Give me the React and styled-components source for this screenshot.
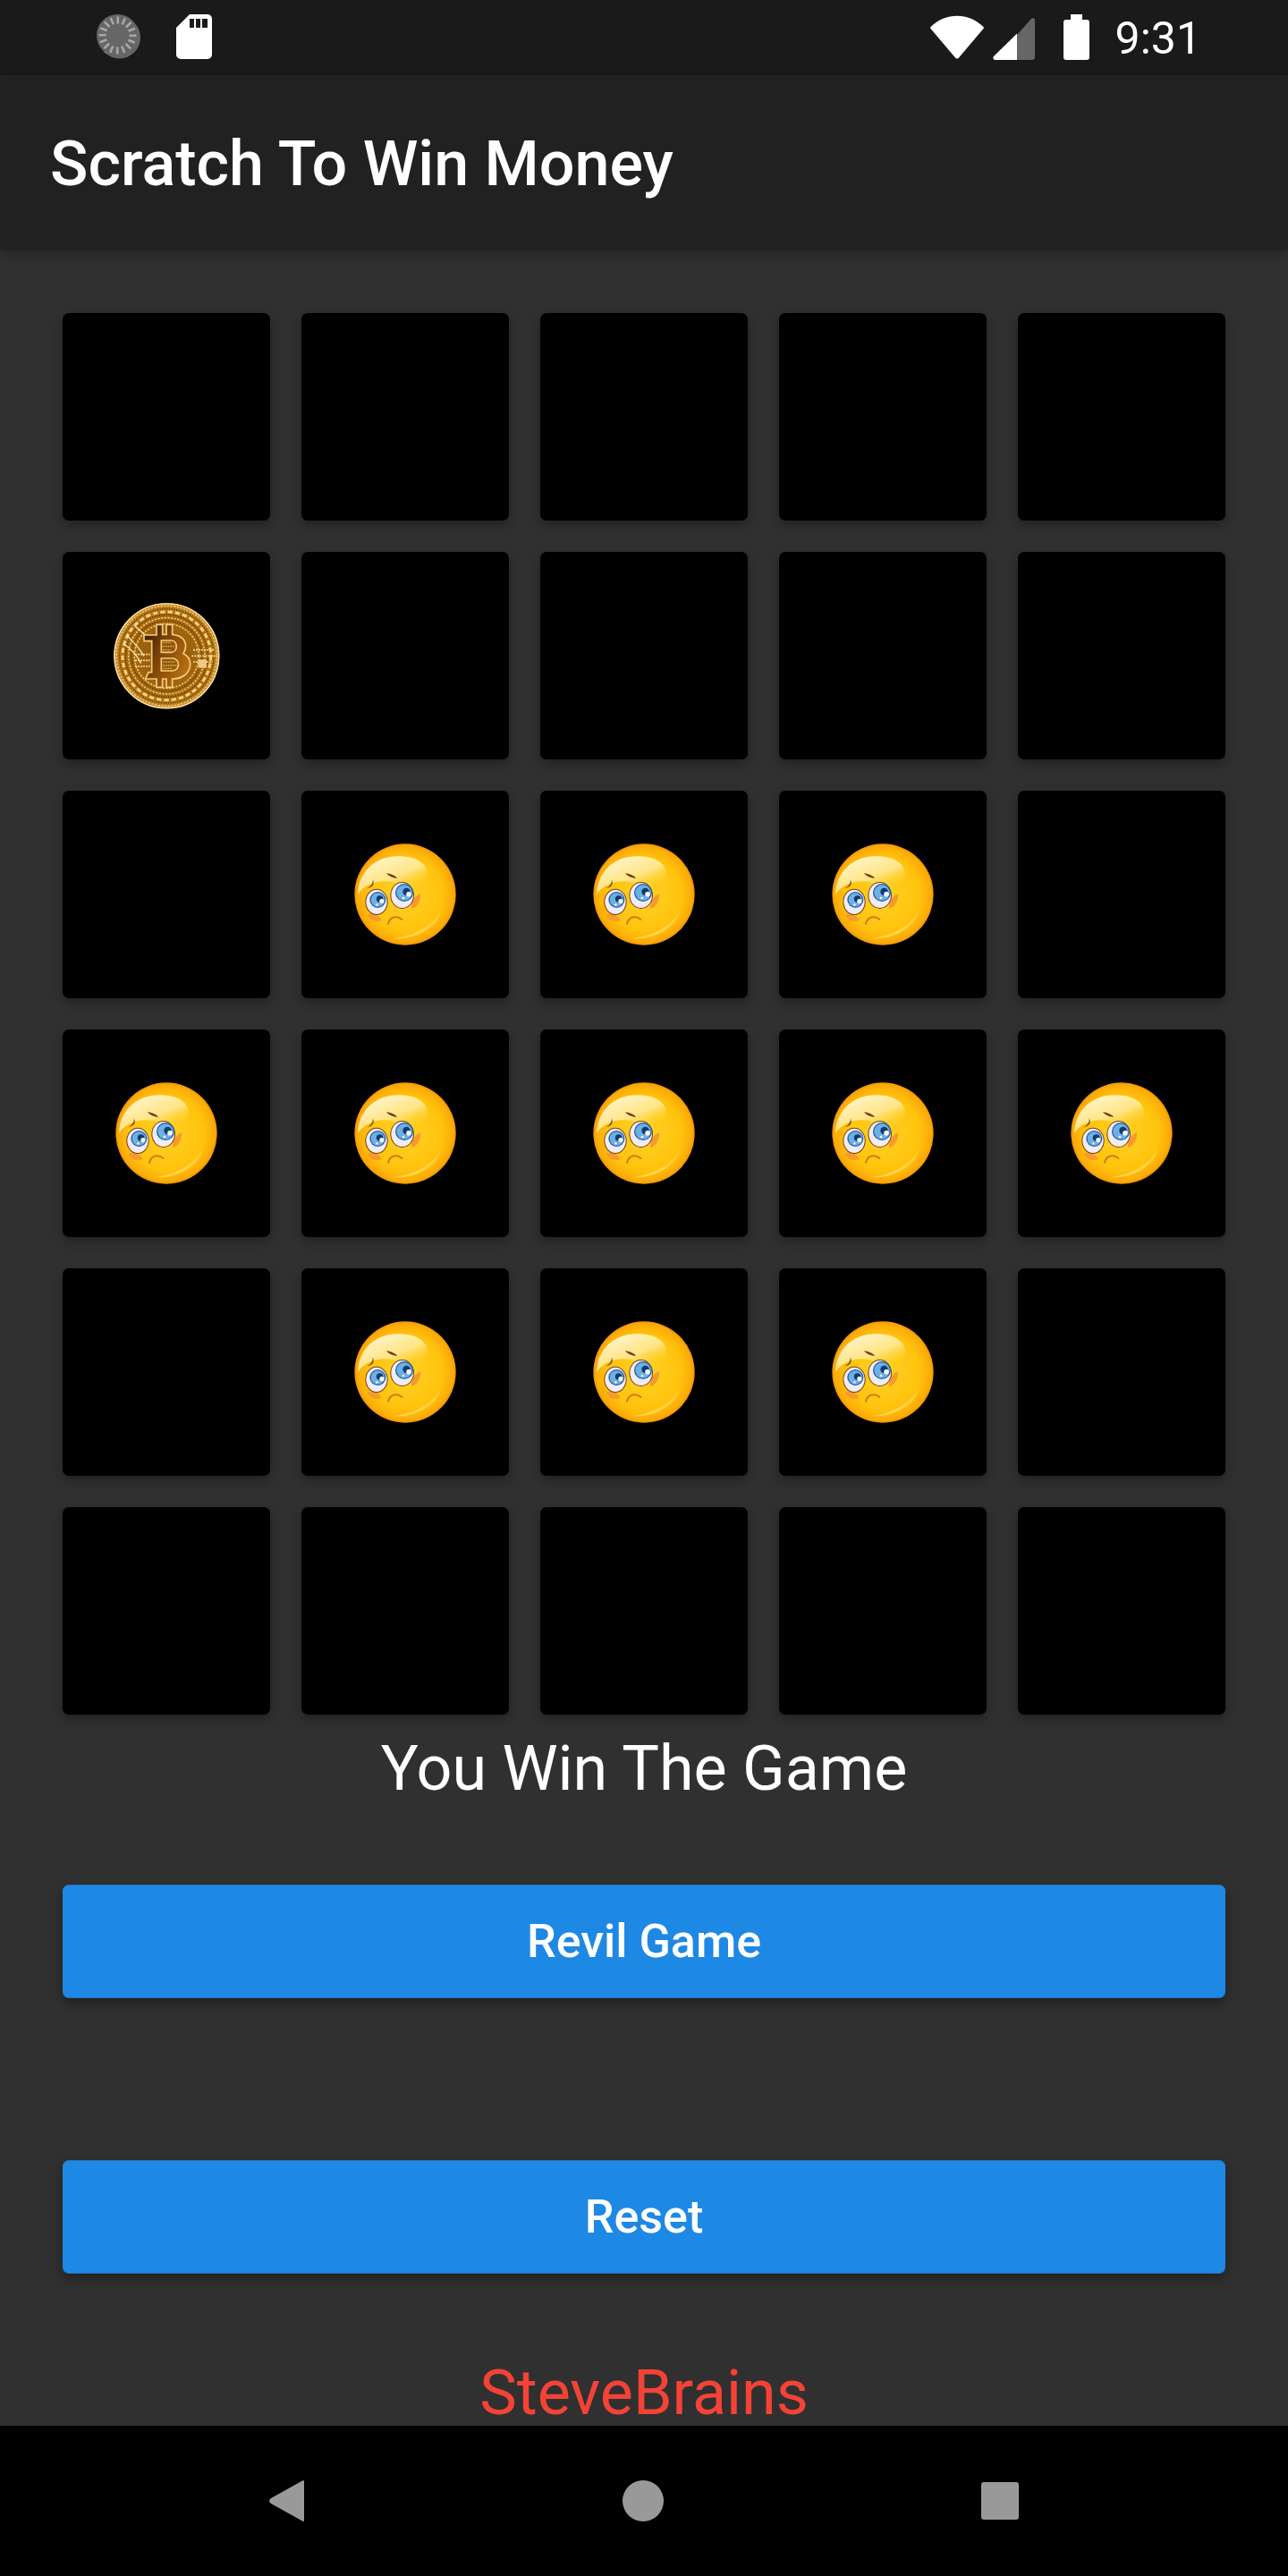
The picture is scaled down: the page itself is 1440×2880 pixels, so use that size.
import { useId } from "react";
import styled, { createGlobalStyle } from "styled-components";

const GlobalStyle = createGlobalStyle`
  html, body {
    margin: 0;
    padding: 0;
    background: #303030;
  }
  * {
    box-sizing: border-box;
  }
`;

const Screen = styled.div`
  width: 1440px;
  height: 2880px;
  display: flex;
  flex-direction: column;
  font-family: Roboto, "Liberation Sans", sans-serif;
  overflow: hidden;
`;

const StatusBar = styled.div`
  height: 84px;
  flex: none;
  display: flex;
  align-items: flex-start;
  background: #1a1a1a;
  padding: 16px 97px 0 108px;
  color: #fff;
`;

const StatusLeft = styled.div`
  display: flex;
  gap: 40px;
  flex: 1;
`;

const StatusRight = styled.div`
  display: flex;
  align-items: flex-start;
`;

const Time = styled.span`
  font-size: 50px;
  line-height: 57px;
  font-weight: 400;
  margin-left: 29px;
  margin-top: -1px;
`;

const AppBar = styled.div`
  height: 196px;
  flex: none;
  display: flex;
  align-items: center;
  padding: 2px 0 0 56px;
  background: #212121;
  box-shadow: 0 4px 12px rgba(0, 0, 0, 0.25);
  position: relative;
  z-index: 1;
`;

const Title = styled.h1`
  margin: 0;
  font-size: 70px;
  font-weight: 500;
  color: #fff;
`;

const Main = styled.div`
  flex: 1;
  display: flex;
  flex-direction: column;
  align-items: stretch;
  padding: 70px 70px 0;
  background: #303030;
`;

const Board = styled.div`
  display: grid;
  grid-template-columns: repeat(5, 232px);
  grid-auto-rows: 232px;
  gap: 35px;
`;

const Tile = styled.div`
  display: flex;
  align-items: center;
  justify-content: center;
  background: #000;
  border-radius: 7px;
  box-shadow: 0 5px 12px rgba(0, 0, 0, 0.3);
`;

const Message = styled.div`
  margin-top: 21px;
  font-size: 70px;
  line-height: 78px;
  text-align: center;
  color: #fff;
`;

const ActionButton = styled.button`
  display: block;
  width: 100%;
  height: 127px;
  margin-top: ${({ $top }) => $top}px;
  border: 0;
  border-top: 1px solid #2674bb;
  border-bottom: 1px solid #2674bb;
  border-radius: 7px;
  background: #1e88e5;
  color: #fff;
  font-family: inherit;
  font-size: 52px;
  font-weight: 500;
  box-shadow: 0 5px 12px rgba(0, 0, 0, 0.35);
`;

const Credit = styled.div`
  margin-top: 101px;
  font-size: 70px;
  line-height: 64px;
  text-align: center;
  color: #f44336;
`;

const NavBar = styled.div`
  height: 168px;
  flex: none;
  background: #000;
  display: flex;
  align-items: center;
  justify-content: center;
  gap: 355px;
`;

function Spinner() {
  const ticks = Array.from({ length: 16 }, (_, i) => i * 22.5);
  return (
    <svg width="49" height="50" viewBox="0 0 49 50">
      <circle cx="25.5" cy="26" r="23.5" fill="#666" />
      <path d="M8 42 C22 50 43 42 45 14 C49 28 44 44 24 44 C17 44 12 43 8 42 Z" fill="#fff" />
      <circle cx="23.5" cy="23.5" r="23.5" fill="#666" />
      {ticks.map((a) => (
        <rect
          key={a}
          x="22.5"
          y="2.5"
          width="2.6"
          height="8"
          fill="#a8a8a8"
          transform={`rotate(${a} 23.5 23.5)`}
        />
      ))}
    </svg>
  );
}

function SdCard() {
  return (
    <svg width="40" height="50" viewBox="0 0 40 50">
      <path
        fillRule="evenodd"
        fill="#fff"
        d="M15 0 H35 A5 5 0 0 1 40 5 V45 A5 5 0 0 1 35 50 H5 A5 5 0 0 1 0 45 V15 Z M15 5 V15 H20 V5 Z M22 5 V15 H27 V5 Z M29 5 V15 H35 V5 Z"
      />
    </svg>
  );
}

function Wifi() {
  return (
    <svg width="60" height="50" viewBox="0 0 60 50" style={{ marginTop: 1 }}>
      <path
        fill="#fff"
        d="M0.5 13 C17 -3.5 43 -3.5 59.5 13 C60 13.7 60 14.5 59.3 15.3 L32 47.5 C30.8 48.8 29.2 48.8 28 47.5 L0.7 15.3 C0 14.5 0 13.7 0.5 13 Z"
      />
    </svg>
  );
}

function Signal() {
  return (
    <svg width="47" height="48" viewBox="0 0 47 48" style={{ marginLeft: 10, marginTop: 3 }}>
      <path fill="#666" d="M27 20 L43 2 C44.5 0.5 47 1 47 3.5 V45 A3 3 0 0 1 44 48 H27 Z" />
      <path fill="#fff" d="M27 18.5 V48 H3 C0.5 48 -0.5 45.5 1.2 43.8 Z" />
    </svg>
  );
}

function Battery() {
  return (
    <svg width="29" height="51" viewBox="0 0 29 51" style={{ marginLeft: 32 }}>
      <path
        fill="#fff"
        d="M8 0 H21 V6 H26 A3 3 0 0 1 29 9 V48 A3 3 0 0 1 26 51 H3 A3 3 0 0 1 0 48 V9 A3 3 0 0 1 3 6 H8 Z"
      />
    </svg>
  );
}

function Coin() {
  const id = useId();
  const rings = [168, 158, 148, 138, 128, 118, 108];
  return (
    <svg width="119" height="119" viewBox="228 222 357 357">
      <defs>
        <radialGradient id={`${id}face`} cx="50%" cy="50%" r="52%">
          <stop offset="0%" stopColor="#8a5208" />
          <stop offset="75%" stopColor="#a86c10" />
          <stop offset="100%" stopColor="#c58c2c" />
        </radialGradient>
        <linearGradient id={`${id}mark`} x1="0" y1="0" x2="1" y2="0.6">
          <stop offset="0%" stopColor="#2e1602" />
          <stop offset="45%" stopColor="#7d4306" />
          <stop offset="100%" stopColor="#b86f12" />
        </linearGradient>
      </defs>
      <circle cx="406" cy="400" r="177" fill={`url(#${id}face)`} />
      <circle cx="406" cy="400" r="175" fill="none" stroke="#f8dc9a" strokeWidth="5" />
      {rings.map((r, i) => (
        <circle
          key={r}
          cx="406"
          cy="400"
          r={r}
          fill="none"
          stroke={i % 2 ? "#3f2003" : "#ffd277"}
          strokeWidth={i === 2 ? 9 : 4}
          strokeDasharray={i === 2 ? "16 9" : i % 2 ? "3 5" : "7 4"}
        />
      ))}
      <path
        d="M272 330 C290 350 312 370 330 400 M262 360 C285 375 305 395 320 425 M300 300 C320 318 335 330 350 345"
        fill="none"
        stroke="#fff0c0"
        strokeWidth="4"
      />
      <path
        d="M490 400 H572 M495 380 H565 M495 420 H560 M300 395 H350 M300 415 H350 M300 435 H350"
        fill="none"
        stroke="#fbdc98"
        strokeWidth="5"
        strokeDasharray="6 3"
      />
      <rect x="512" y="412" width="28" height="28" fill="#f0c987" />
      <path
        fillRule="evenodd"
        fill={`url(#${id}mark)`}
        stroke="#f5cc7c"
        strokeWidth="5"
        d="M330 330 H372 V295 H392 V328 H405 V295 H425 V328 C470 332 478 365 462 392 C490 405 492 440 470 462 C455 475 440 477 425 477 V505 H405 V477 H392 V505 H372 V477 H335 L345 455 H356 V350 H330 Z M388 348 V388 H420 C445 388 445 348 420 348 Z M388 408 V450 H425 C452 450 452 408 425 408 Z"
      />
      <path d="M394 355 H420 M394 368 H432 M394 380 H420 M394 420 H435 M394 432 H440 M394 442 H425" stroke="#e2ad52" strokeWidth="4" strokeDasharray="5 3" />
    </svg>
  );
}

function Eye({ cx, cy, rx, ry, ix, iy, ir }) {
  return (
    <>
      <ellipse cx={cx} cy={cy} rx={rx + 3} ry={ry + 3} fill="#7a3f0c" />
      <ellipse cx={cx} cy={cy} rx={rx} ry={ry} fill="#f1ecf8" />
      <circle cx={ix} cy={iy} r={ir} fill="#1f5fa6" />
      <circle cx={ix} cy={iy} r={ir - 4} fill="#6db0e4" />
      <circle cx={ix + ir * 0.25} cy={iy - ir * 0.1} r={ir * 0.42} fill="#123a6e" />
      <circle cx={ix + ir * 0.5} cy={iy + ir * 0.18} r={ir * 0.28} fill="#fff" />
      <circle cx={ix - ir * 0.1} cy={iy + ir * 0.6} r={ir * 0.13} fill="#fff" />
    </>
  );
}

function SadFace() {
  const id = useId();
  return (
    <svg width="116" height="116" viewBox="105 64 348 348">
      <defs>
        <radialGradient id={`${id}skin`} cx="50%" cy="50%" r="51%">
          <stop offset="0%" stopColor="#ffd126" />
          <stop offset="72%" stopColor="#ffc30d" />
          <stop offset="93%" stopColor="#fcab08" />
          <stop offset="100%" stopColor="#ea8a06" />
        </radialGradient>
        <linearGradient id={`${id}shine`} x1="0.1" y1="0.05" x2="0.75" y2="0.9">
          <stop offset="0%" stopColor="#fff8d8" />
          <stop offset="60%" stopColor="#ffeb9c" stopOpacity="0.85" />
          <stop offset="100%" stopColor="#ffd126" stopOpacity="0" />
        </linearGradient>
        <linearGradient id={`${id}glow`} x1="0.2" y1="0" x2="0.8" y2="1">
          <stop offset="0%" stopColor="#ffd126" stopOpacity="0" />
          <stop offset="100%" stopColor="#ffe77a" stopOpacity="0.9" />
        </linearGradient>
      </defs>
      <circle cx="279" cy="238" r="170" fill={`url(#${id}skin)`} />
      <path
        d="M120 240 C122 160 180 110 255 110 C320 110 354 135 355 172 C356 232 300 215 240 198 C185 184 135 210 120 240 Z"
        fill={`url(#${id}shine)`}
      />
      <path d="M235 385 C310 395 395 345 400 290 C375 340 310 380 235 385 Z" fill={`url(#${id}glow)`} />
      <path d="M152 306 C168 298 192 306 200 325 C180 332 160 325 152 306 Z" fill="#f59a2c" />
      <path d="M300 285 C322 282 330 258 331 236 C314 240 298 262 300 285 Z" fill="#f59a2c" />
      <Eye cx={183} cy={263} rx={35} ry={41} ix={187} iy={256} ir={27} />
      <Eye cx={269} cy={241} rx={37} ry={42} ix={276} iy={232} ir={30} />
      <path d="M150 218 C165 212 172 200 170 188 C178 202 170 216 150 218 Z" fill="#7a3d12" />
      <path d="M216 167 C232 169 246 175 252 184 C240 183 226 179 216 167 Z" fill="#7a3d12" />
      <path d="M222 336 C228 312 252 308 268 322" fill="none" stroke="#d07a10" strokeWidth="6" strokeLinecap="round" />
    </svg>
  );
}

// 0 = still covered, 1 = coin, 2 = sad face
const board = [
  [0, 0, 0, 0, 0],
  [1, 0, 0, 0, 0],
  [0, 2, 2, 2, 0],
  [2, 2, 2, 2, 2],
  [0, 2, 2, 2, 0],
  [0, 0, 0, 0, 0],
];

function App() {
  return (
    <Screen>
      <GlobalStyle />
      <StatusBar>
        <StatusLeft>
          <Spinner />
          <SdCard />
        </StatusLeft>
        <StatusRight>
          <Wifi />
          <Signal />
          <Battery />
          <Time>9:31</Time>
        </StatusRight>
      </StatusBar>
      <AppBar>
        <Title>Scratch To Win Money</Title>
      </AppBar>
      <Main>
        <Board>
          {board.flat().map((cell, i) => (
            <Tile key={i}>
              {cell === 1 && <Coin />}
              {cell === 2 && <SadFace />}
            </Tile>
          ))}
        </Board>
        <Message>You Win The Game</Message>
        <ActionButton $top={91}>Revil Game</ActionButton>
        <ActionButton $top={181}>Reset</ActionButton>
        <Credit>SteveBrains</Credit>
      </Main>
      <NavBar>
        <svg width="40" height="46" viewBox="0 0 40 46">
          <path fill="#999" d="M39 1 V45 C39 46 38 46.5 37 45.5 L2 26 C-0.5 24.5 -0.5 21.5 2 20 L37 0.5 C38 0 39 0 39 1 Z" />
        </svg>
        <svg width="46" height="46" viewBox="0 0 46 46">
          <circle cx="23" cy="23" r="23" fill="#999" />
        </svg>
        <svg width="42" height="42" viewBox="0 0 42 42">
          <rect width="42" height="42" rx="3" fill="#999" />
        </svg>
      </NavBar>
    </Screen>
  );
}

export default App;
